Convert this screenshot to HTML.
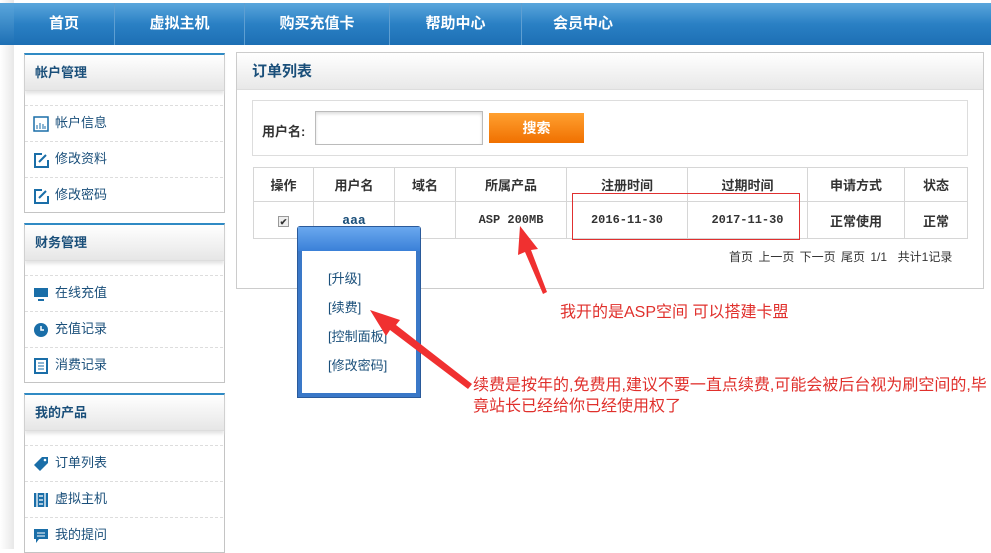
<!DOCTYPE html>
<html><head><meta charset="utf-8"><style>
*{margin:0;padding:0;box-sizing:border-box}
body{width:991px;height:549px;overflow:hidden;background:#fff;font-family:"Liberation Sans","Noto Sans CJK SC",sans-serif;position:relative;font-size:13px}
.a{position:absolute}
.nav{left:14px;top:3px;width:977px;height:42px;background:linear-gradient(#5aa6dc,#2a80c4 50%,#1d6fb4);}
.nav span{position:absolute;top:0;height:42px;line-height:42px;color:#fff;font-weight:bold;font-size:15px;text-align:center;border-right:1px solid #5e9fd2}
.panel{border:1px solid #c4c4c4;border-top:2px solid #2f8ac4;background:#fff}
.ph{height:36px;background:linear-gradient(#fff,#e6e6e6);border-bottom:1px solid #ddd;box-shadow:0 3px 3px #e6e6e6;font-weight:bold;color:#1a4f7a;font-size:13px;line-height:36px;padding-left:10px}
.it{position:absolute;left:0;width:198px;height:36px;border-top:1px dashed #ddd;line-height:34px;padding-left:30px;color:#1a4f7a;font-size:13px}
.ic{position:absolute;left:8px;top:10px;width:16px;height:16px}
table{border-collapse:collapse}
td{border:1px solid #d6d6d6;text-align:center;font-size:13px;font-weight:bold;color:#333}
.red{color:#e0302c;font-size:16px}
</style></head><body>
<div class="a" style="left:0;top:0;width:14px;height:549px;background:linear-gradient(90deg,#fff,#e8e8e8)"></div>
<div class="a" style="left:0;top:3px;width:14px;height:42px;background:linear-gradient(#5aa6dc,#1d6fb4)"></div>
<div class="a nav">
<span style="left:0;width:101px">首页</span>
<span style="left:101px;width:130px">虚拟主机</span>
<span style="left:231px;width:145px">购买充值卡</span>
<span style="left:376px;width:132px">帮助中心</span>
<span style="left:508px;width:122px;border:none">会员中心</span>
</div>

<div class="a panel" style="left:24px;top:53px;width:201px;height:160px"><div class="ph">帐户管理</div>
<div class="it" style="top:50px"><svg class="ic" viewBox="0 0 16 16"><rect x="1" y="1" width="14" height="14" fill="none" stroke="#1a6ea8" stroke-width="1.5"/><path d="M4 13V9M7 13V7M10 13V8M12 13V10" stroke="#1a6ea8"/></svg>帐户信息</div>
<div class="it" style="top:86px"><svg class="ic" viewBox="0 0 16 16"><path d="M9 2H2v13h13V8" fill="none" stroke="#1a6ea8" stroke-width="2"/><path d="M6 10l7-7" stroke="#1a6ea8" stroke-width="2"/></svg>修改资料</div>
<div class="it" style="top:122px"><svg class="ic" viewBox="0 0 16 16"><path d="M9 2H2v13h13V8" fill="none" stroke="#1a6ea8" stroke-width="2"/><path d="M6 10l7-7" stroke="#1a6ea8" stroke-width="2"/></svg>修改密码</div>
</div>
<div class="a panel" style="left:24px;top:223px;width:201px;height:160px"><div class="ph">财务管理</div>
<div class="it" style="top:50px"><svg class="ic" viewBox="0 0 16 16"><rect x="1" y="2" width="14" height="9" fill="#1a6ea8"/><rect x="5" y="13" width="6" height="2" fill="#1a6ea8"/></svg>在线充值</div>
<div class="it" style="top:86px"><svg class="ic" viewBox="0 0 16 16"><circle cx="8" cy="8" r="7" fill="#1a6ea8"/><path d="M8 4v4h3" stroke="#fff" stroke-width="1.5" fill="none"/></svg>充值记录</div>
<div class="it" style="top:122px"><svg class="ic" viewBox="0 0 16 16"><rect x="2" y="1" width="12" height="14" fill="none" stroke="#1a6ea8" stroke-width="2"/><path d="M5 5h6M5 8h6M5 11h6" stroke="#1a6ea8"/></svg>消费记录</div>
</div>
<div class="a panel" style="left:24px;top:393px;width:201px;height:160px"><div class="ph">我的产品</div>
<div class="it" style="top:50px"><svg class="ic" viewBox="0 0 16 16"><path d="M9 1h6v6l-8 8-6-6z" fill="#1a6ea8"/><circle cx="12" cy="4" r="1.3" fill="#fff"/></svg>订单列表</div>
<div class="it" style="top:86px"><svg class="ic" viewBox="0 0 16 16"><rect x="1" y="1" width="14" height="14" fill="#1a6ea8"/><path d="M4 1v14M12 1v14M6 4h4M6 8h4M6 12h4" stroke="#fff" stroke-width="1.3"/></svg>虚拟主机</div>
<div class="it" style="top:122px"><svg class="ic" viewBox="0 0 16 16"><path d="M1 1h14v10H6l-3 4v-4H1z" fill="#1a6ea8"/><path d="M4 5h8M4 8h8" stroke="#fff"/></svg>我的提问</div>
</div>

<div class="a" style="left:236px;top:52px;width:748px;height:237px;border:1px solid #ccc;background:#fff">
<div style="height:37px;background:linear-gradient(#fff,#e8e8e8);border-bottom:1px solid #ddd;font-weight:bold;color:#1a4f7a;font-size:15px;line-height:37px;padding-left:15px">订单列表</div>
</div>
<div class="a" style="left:252px;top:100px;width:716px;height:56px;border:1px solid #ddd"></div>
<div class="a" style="left:262px;top:121px;font-weight:bold;color:#333">用户名:</div>
<div class="a" style="left:315px;top:111px;width:168px;height:34px;border:1px solid #bbb;box-shadow:inset 0 2px 3px #ddd"></div>
<div class="a" style="left:489px;top:113px;width:95px;height:30px;background:linear-gradient(#ffa030,#f07000);color:#fff;font-weight:bold;font-size:14px;text-align:center;line-height:30px">搜索</div>

<table class="a" style="left:253px;top:167px;width:715px">
<tr style="height:34px"><td style="width:60px">操作</td><td style="width:81px">用户名</td><td style="width:61px">域名</td><td style="width:111px">所属产品</td><td style="width:121px">注册时间</td><td style="width:120px">过期时间</td><td style="width:97px">申请方式</td><td>状态</td></tr>
<tr style="height:37px"><td><span style="display:inline-block;width:11px;height:11px;border:1px solid #999;background:#eee;font-size:9px;line-height:10px">✔</span></td><td style="color:#1a4f7a;font-family:'Liberation Mono',monospace">aaa</td><td></td><td style="font-family:'Liberation Mono',monospace;font-size:12px">ASP 200MB</td><td style="font-family:'Liberation Mono',monospace;font-size:12px">2016-11-30</td><td style="font-family:'Liberation Mono',monospace;font-size:12px">2017-11-30</td><td>正常使用</td><td>正常</td></tr>
</table>
<div class="a" style="left:572px;top:193px;width:228px;height:47px;border:1px solid #e03030"></div>
<div class="a" style="left:729px;top:248px;font-size:12px;color:#333;word-spacing:2px">首页 上一页 下一页 尾页 1/1 &nbsp;共计1记录</div>

<div class="a" style="left:297px;top:226px;width:124px;height:172px;background:#3a78c8;border:1px solid #2a5a9a;border-radius:3px 3px 0 0">
<div style="height:24px;background:linear-gradient(#6aa8ee,#3a80d8)"></div>
<div style="position:absolute;left:4px;top:24px;right:4px;bottom:4px;background:#fff;color:#1a4f7a;font-size:13px;padding:13px 0 0 26px;line-height:29px">[升级]<br>[续费]<br>[控制面板]<br>[修改密码]</div>
</div>

<svg class="a" style="left:0;top:0" width="991" height="549">
<path d="M547 292 L531 250 L538 249 L520 226 L518 255 L525 252 L543 294Z" fill="#f03030"/>
<path d="M472 384 L396 325 L400 320 L370 310 L386 336 L390 330 L468 389Z" fill="#f03030"/>
</svg>
<div class="a red" style="left:560px;top:298px">我开的是ASP空间 可以搭建卡盟</div>
<div class="a red" style="left:473px;top:375px;width:518px;line-height:21px">续费是按年的,免费用,建议不要一直点续费,可能会被后台视为刷空间的,毕竟站长已经给你已经使用权了</div>
</body></html>
